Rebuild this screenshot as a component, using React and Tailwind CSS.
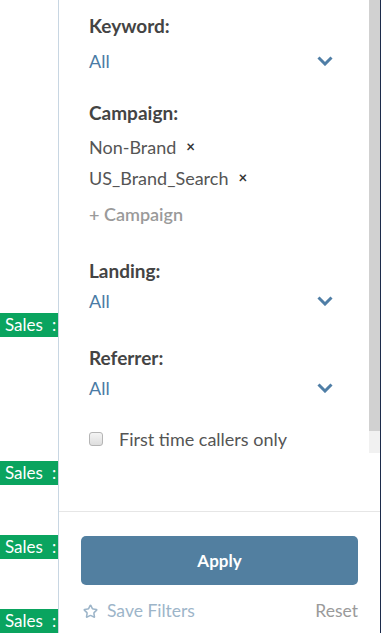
import { Star } from "lucide-react";

const font = { fontFamily: "Lato, 'Open Sans', sans-serif" };

function Chevron() {
  return (
    <svg width="16" height="10" viewBox="0 0 16 10" className="shrink-0">
      <path d="M1.5 1.5 L8 8 L14.5 1.5" fill="none" stroke="#4f7ea6" strokeWidth="3" />
    </svg>
  );
}

function SelectRow({ label, first }) {
  return (
    <div className={first ? "mt-[14px]" : "mt-[33px]"}>
      <div className="h-6 leading-6 text-[19px] font-bold text-[#444]">{label}</div>
      <div className={(first ? "mt-[11px]" : "mt-[6px]") + " h-6 flex items-center justify-between"}>
        <span className="leading-6 text-[18px] text-[#4a7ba5]">All</span>
        <Chevron />
      </div>
    </div>
  );
}

function Chip({ name, className }) {
  return (
    <div className={"h-6 flex items-center text-[18px] text-[#555] " + className}>
      <span className="leading-6">{name}</span>
      <span className="ml-[10px] -mt-[3px] text-[15px] font-bold text-[#333] leading-6">×</span>
    </div>
  );
}

function SalesTag({ className }) {
  return (
    <div className={"h-[24px] w-[58px] bg-[#0aa45f] text-white text-[17px] leading-[24px] pl-[5px] whitespace-nowrap overflow-hidden " + className}>
      Sales<span className="ml-[9px]">:</span>
    </div>
  );
}

export default function App() {
  return (
    <div className="flex h-[633px] w-[381px] overflow-hidden bg-white" style={font}>
      {/* list behind the panel */}
      <div className="w-[58px] shrink-0 flex flex-col">
        <SalesTag className="mt-[313px]" />
        <SalesTag className="mt-[124px]" />
        <SalesTag className="mt-[50px]" />
        <SalesTag className="mt-[50px]" />
      </div>
      <div className="w-px shrink-0 bg-[#c8d6e2]" />

      {/* filter panel */}
      <div className="flex-1 flex flex-col">
        <div className="h-[453px] flex">
          <div className="flex-1 pl-[30px] pr-[36px] overflow-hidden">
            <SelectRow label="Keyword:" first />

            <div className="mt-[28px]">
              <div className="h-6 leading-6 text-[19px] font-bold text-[#444]">Campaign:</div>
              <Chip name="Non-Brand" className="mt-[10px]" />
              <Chip name="US_Brand_Search" className="mt-[7px]" />
              <div className="mt-[12px] h-6 leading-6 text-[18px] font-semibold text-[#9a9a9a]">+ Campaign</div>
            </div>

            <SelectRow label="Landing:" />
            <SelectRow label="Referrer:" />

            <label className="mt-[27px] h-6 flex items-center">
              <span className="w-[14px] h-[14px] rounded-[3px] border border-[#b5b5b5] bg-gradient-to-b from-[#f4f4f4] to-[#dedede]" />
              <span className="ml-[16px] leading-6 text-[18px] text-[#555]">First time callers only</span>
            </label>
          </div>
          <div className="w-[11px] flex flex-col">
            <div className="h-[431px] bg-[#d1d1d1]" />
            <div className="flex-1 bg-[#f1f1f1]" />
          </div>
        </div>

        <div className="h-[58px]" />

        <div className="flex-1 border-t border-[#e6e6e6] px-[22px]">
          <button className="mt-[24px] w-full h-[49px] rounded-[5px] bg-[#527fa0] text-white text-[17px] font-bold">
            Apply
          </button>
          <div className="mt-[14px] h-6 flex items-center justify-between">
            <div className="flex items-center text-[#9db5c9]">
              <Star size={15} strokeWidth={2.5} className="ml-[2px]" />
              <span className="ml-[9px] text-[17.5px] leading-6">Save Filters</span>
            </div>
            <span className="text-[17.5px] leading-6 text-[#9a9a9a]">Reset</span>
          </div>
        </div>
      </div>
      <div className="w-px shrink-0 bg-[#1c2b4b]" />
    </div>
  );
}
